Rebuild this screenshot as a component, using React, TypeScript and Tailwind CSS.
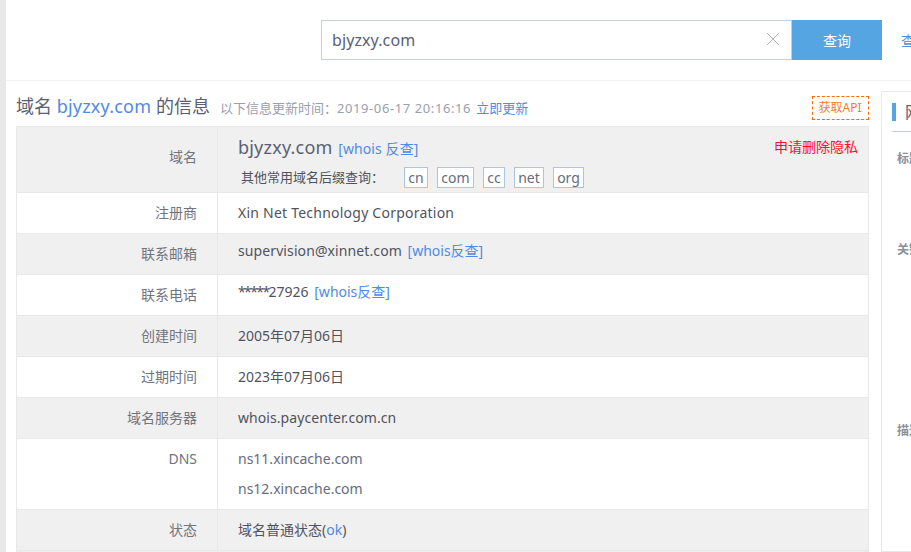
const font = "font-['Noto_Sans','Noto_Sans_CJK_SC',sans-serif]";

function Row({ label, gray, children, h = "h-[41px]", labelTop = "pt-[9px]", valueTop = "pt-[9px]" }: { label: string; gray?: boolean; children: React.ReactNode; h?: string; labelTop?: string; valueTop?: string }) {
  return (
    <div className={`flex ${h} border-b border-[#e8e8e8] ${gray ? "bg-[#f0f0f0]" : "bg-white"}`}>
      <div className={`w-[200px] shrink-0 pr-[20px] text-right text-[14px] text-[#70747f] ${labelTop}`}>{label}</div>
      <div className={`flex-1 border-l border-[#e8e8e8] pl-[20px] text-[14px] text-[#50535f] ${valueTop}`}>{children}</div>
    </div>
  );
}

function Suffix({ w, children }: { w: string; children: React.ReactNode }) {
  return <span className={`flex h-[21px] ${w} items-center justify-center border border-[#a9c7e0] bg-white text-[14px] text-[#666c80]`}>{children}</span>;
}

function Side({ label, h }: { label: string; h: string }) {
  return <div className={`${h} pl-[15px] text-[12px] font-bold whitespace-nowrap text-[#8a8f9c]`}>{label}</div>;
}

export default function App() {
  return (
    <div className={`flex h-[552px] w-[911px] overflow-hidden bg-white ${font}`}>
      <div className="w-[6px] shrink-0 bg-[#e8e8e8]" />
      <div className="w-[905px] shrink-0">
        <div className="flex h-[81px] border-b border-[#f2f2f2] pt-[20px] pl-[315px] whitespace-nowrap">
          <div className="relative flex h-[40px] w-[471px] shrink-0 items-center border border-[#c5cde0] pl-[10px] text-[16px] tracking-[0.1px] text-[#59607a]">
            bjyzxy.com
            <svg className="absolute top-[11px] right-[11px] h-[14px] w-[14px]" viewBox="0 0 14 14" fill="none" stroke="#b5b5b5" strokeWidth="1">
              <path d="M1 1l12 12M13 1L1 13" />
            </svg>
          </div>
          <button className="h-[40px] w-[90px] shrink-0 bg-[#55a5e3] text-[14px] text-white">查询</button>
          <span className="ml-[19px] pt-[10px] text-[14px] text-[#4a8fe0]">查询</span>
        </div>
        <div className="flex">
          <div className="ml-[10px] w-[853px] shrink-0">
            <div className="flex h-[45px] items-end whitespace-nowrap">
              <div className="pb-[7px] text-[18px] leading-[26px] text-[#5a6072]">
                域名 <span className="tracking-[0.2px] text-[#4f8ae6]">bjyzxy.com</span> 的信息
              </div>
              <div className="ml-[10px] pb-[8px] text-[13px] leading-[20px] text-[#9aa0ae]">
                以下信息更新时间：<span className="tracking-[0.6px]">2019-06-17 20:16:16</span>
                <span className="ml-[5px] text-[#4f8ae6]">立即更新</span>
              </div>
              <div className="mb-[6px] ml-auto flex h-[24px] w-[57px] items-center justify-center border border-dashed border-[#ff6a00] pr-[1px] text-[12px] text-[#ff7a26]">
                获取API
              </div>
            </div>
            <div className="border border-b-0 border-[#e8e8e8]">
              <div className="flex h-[66px] border-b border-[#e8e8e8] bg-[#f0f0f0]">
                <div className="w-[200px] shrink-0 pt-[19px] pr-[20px] text-right text-[14px] text-[#70747f]">域名</div>
                <div className="relative flex-1 border-l border-[#e8e8e8] pl-[20px]">
                  <div className="pt-[6px] text-[18px] leading-[28px] whitespace-nowrap text-[#5a6072]">
                    <span className="tracking-[0.2px]">bjyzxy.com</span> <span className="ml-[1px] text-[14px] tracking-[0.1px] text-[#4f8ae6]">[whois 反查]</span>
                  </div>
                  <div className="absolute top-[9px] right-[10px] text-[14px] text-[#ff0f1f]">申请删除隐私</div>
                  <div className="mt-[4px] flex items-center whitespace-nowrap">
                    <span className="ml-[3px] w-[163px] text-[13px] text-[#50535f]">其他常用域名后缀查询：</span>
                    <div className="flex gap-[9px]">
                      <Suffix w="w-[24px]">cn</Suffix>
                      <Suffix w="w-[37px]">com</Suffix>
                      <Suffix w="w-[22px]">cc</Suffix>
                      <Suffix w="w-[30px]">net</Suffix>
                      <Suffix w="w-[31px]">org</Suffix>
                    </div>
                  </div>
                </div>
              </div>
              <Row label="注册商"><span className="tracking-[0.23px]">Xin Net Technology Corporation</span></Row>
              <Row label="联系邮箱" gray valueTop="pt-[6px]">
                <span className="tracking-[0.1px]">supervision@xinnet.com</span> <span className="ml-[2px] text-[#4f8ae6]">[whois反查]</span>
              </Row>
              <Row label="联系电话" valueTop="pt-[6px]">
                <span className="tracking-[-1.6px]">*****</span>27926 <span className="ml-[2px] text-[#4f8ae6]">[whois反查]</span>
              </Row>
              <Row label="创建时间" gray>2005年07月06日</Row>
              <Row label="过期时间">2023年07月06日</Row>
              <Row label="域名服务器" gray><span className="tracking-[0.07px]">whois.paycenter.com.cn</span></Row>
              <Row label="DNS" h="h-[71px]" labelTop="pt-[9px]" valueTop="pt-[5px]">
                <div className="leading-[30px] text-[#666c80]">
                  <div>ns11.xincache.com</div>
                  <div>ns12.xincache.com</div>
                </div>
              </Row>
              <Row label="状态" gray>
                域名普通状态(<span className="text-[#4f8ae6]">ok</span>)
              </Row>
              <div className="h-[2px] bg-[#ececec]" />
            </div>
          </div>
          <div className="mt-[10px] ml-[12px] h-[461px] w-[200px] shrink-0 border border-[#e8e8e8]">
            <div className="mx-[10px] flex h-[40px] items-center border-b border-[#c5cad8]">
              <span className="h-[18px] w-[4px] bg-[#55a5e3]" />
              <span className="ml-[9px] text-[16px] whitespace-nowrap text-[#5a6072]">网站信息</span>
            </div>
            <div className="pt-[18px]">
              <Side label="标题" h="h-[91px]" />
              <Side label="关键词" h="h-[181px]" />
              <Side label="描述" h="h-[60px]" />
            </div>
          </div>
        </div>
      </div>
    </div>
  );
}
